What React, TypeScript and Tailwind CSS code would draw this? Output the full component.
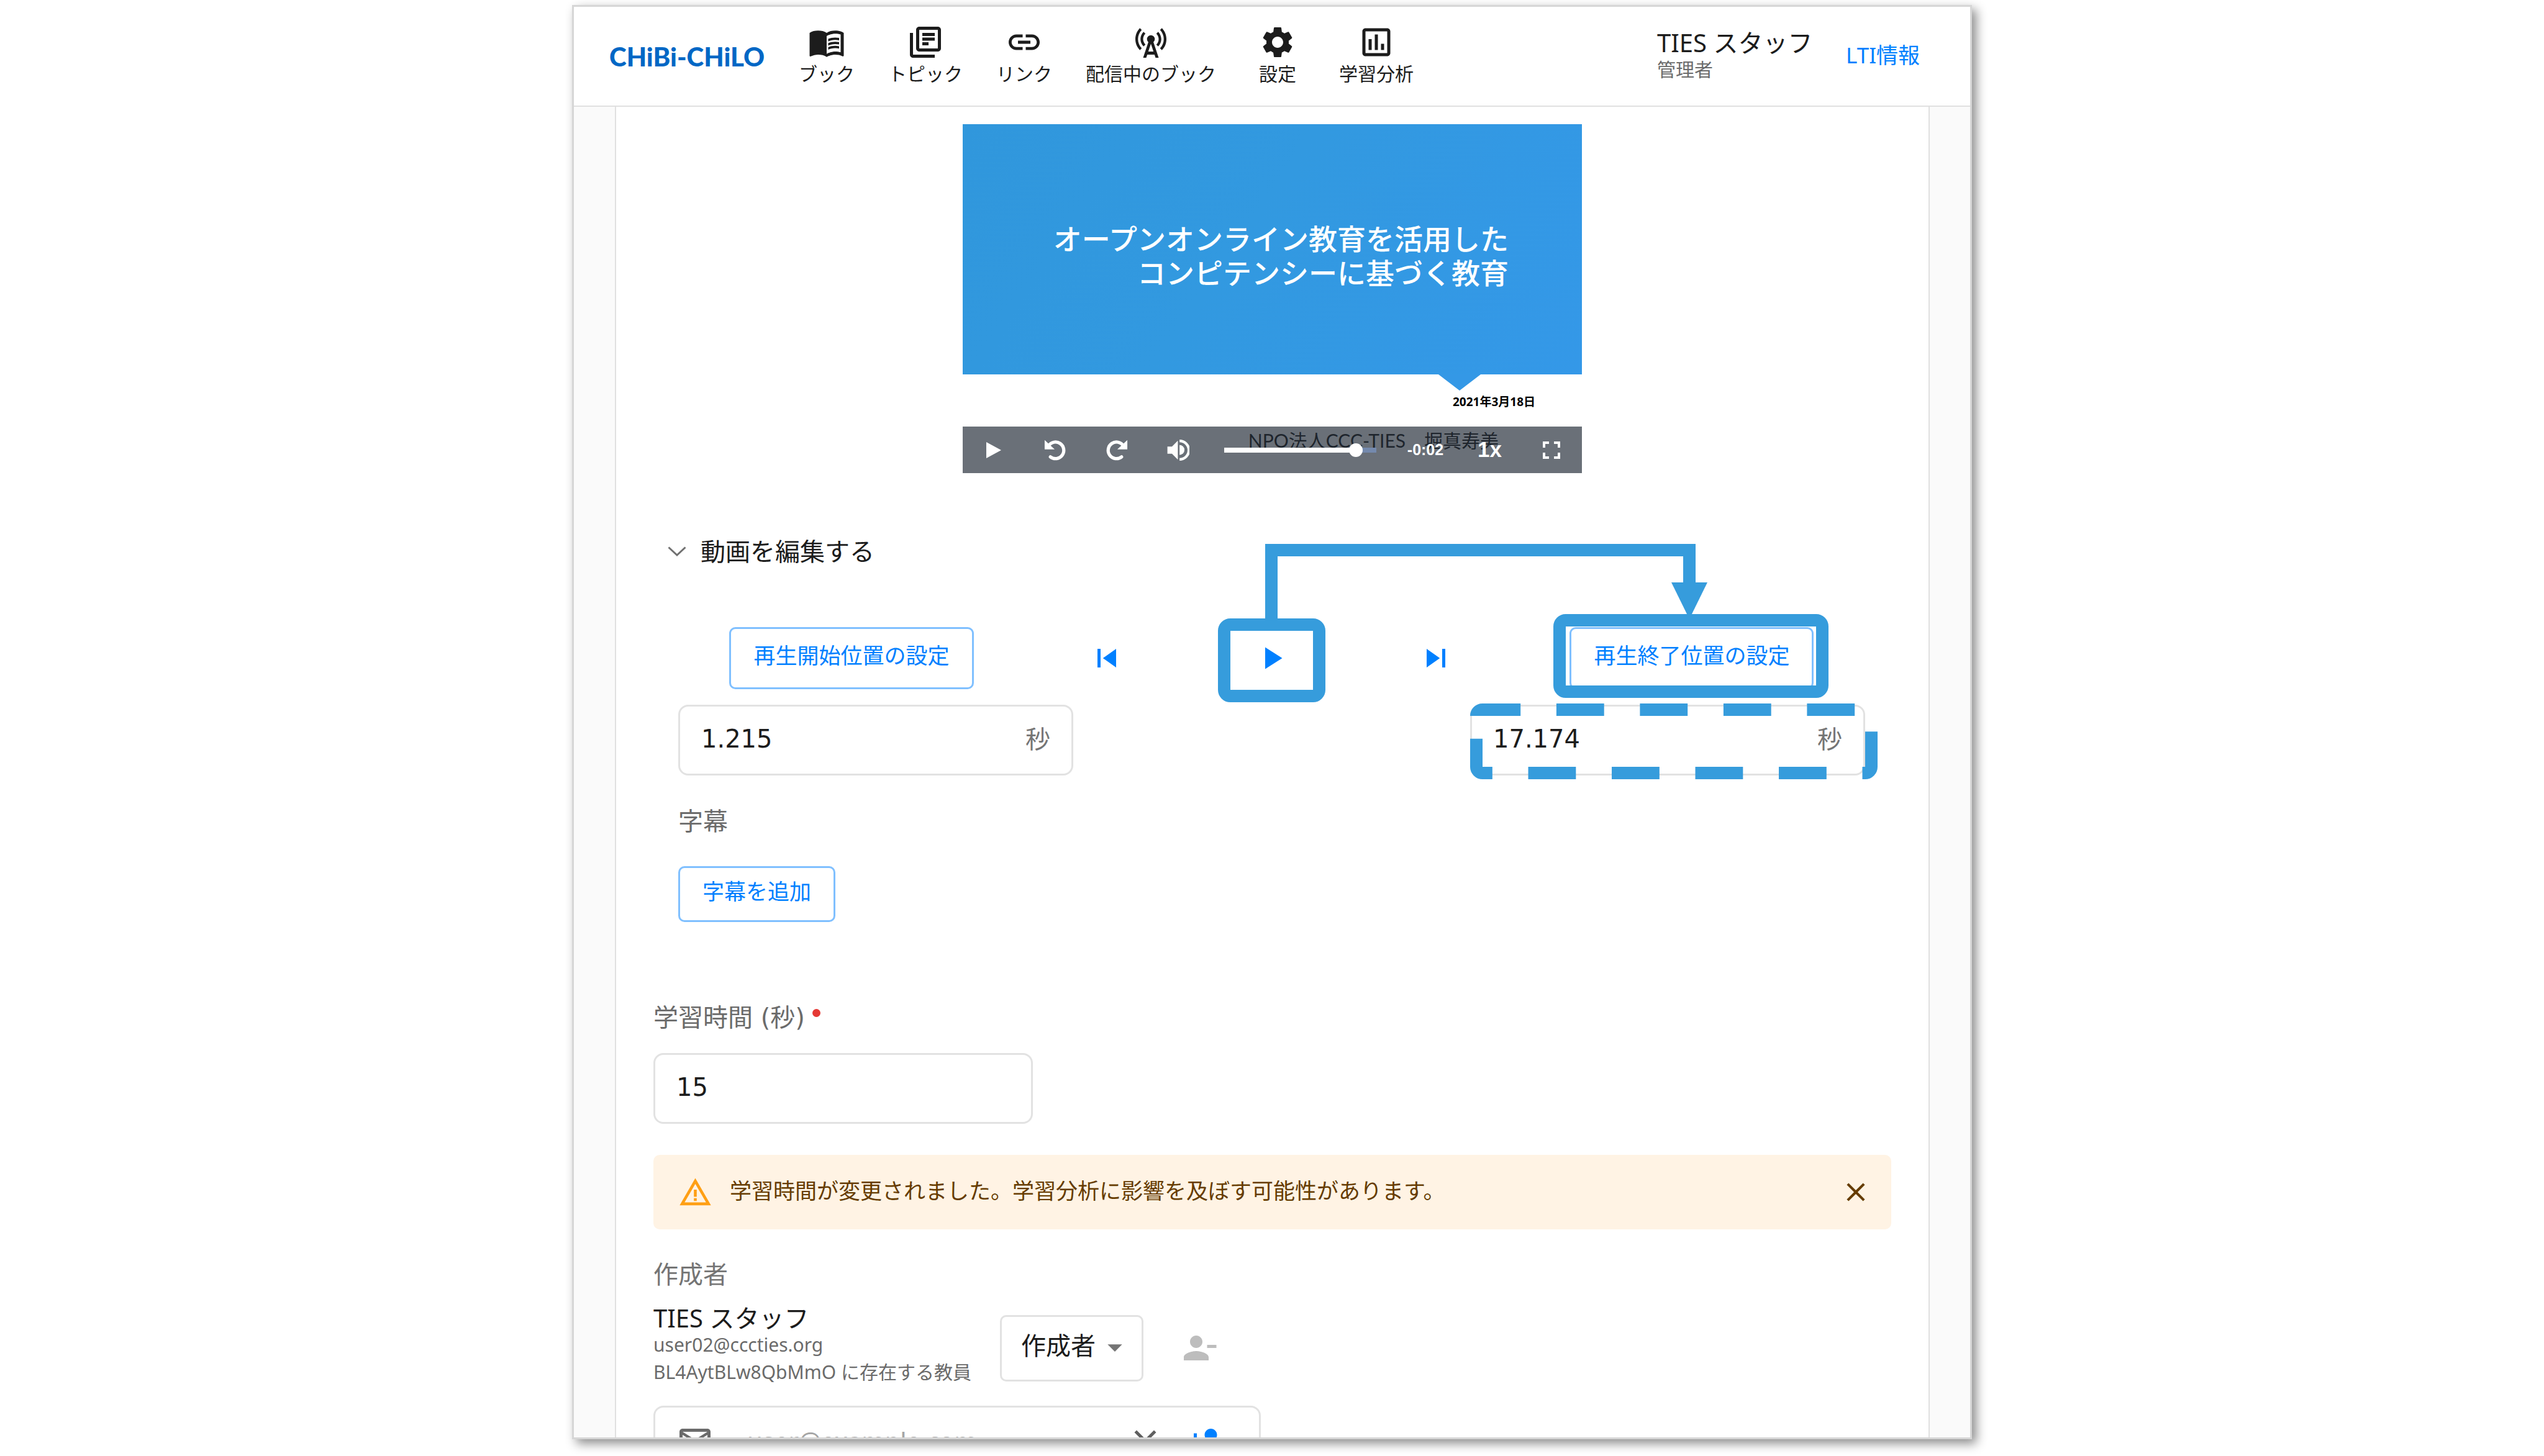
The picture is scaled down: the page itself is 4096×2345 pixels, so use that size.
import React from "react";
import type { IconType } from "react-icons";
import {
  MdMenuBook,
  MdOutlineLibraryBooks,
  MdLink,
  MdCellTower,
  MdSettings,
  MdOutlineAssessment,
  MdSkipPrevious,
  MdSkipNext,
  MdPlayArrow,
  MdWarningAmber,
  MdClose,
  MdArrowDropDown,
  MdPersonRemove,
  MdPersonAdd,
  MdMailOutline,
  MdFullscreen,
} from "react-icons/md";

const navItems: { label: string; Icon: IconType }[] = [
  { label: "ブック", Icon: MdMenuBook },
  { label: "トピック", Icon: MdOutlineLibraryBooks },
  { label: "リンク", Icon: MdLink },
  { label: "配信中のブック", Icon: MdCellTower },
  { label: "設定", Icon: MdSettings },
  { label: "学習分析", Icon: MdOutlineAssessment },
];

function Header() {
  return (
    <header className="flex h-[161px] shrink-0 items-center border-b-2 border-[#e0e0e0] bg-white pr-[81px] pl-[57px]">
      <a
        href="#home"
        className="w-[251px] font-['Lato','Noto_Sans',sans-serif] text-[42px] leading-none font-black whitespace-nowrap text-[#0067c5]"
      >
        CHiBi-CHiLO
      </a>
      <nav className="ml-[54px] flex gap-[54px]">
        {navItems.map(({ label, Icon }) => (
          <a key={label} href="#nav" className="flex min-w-[90px] flex-col items-center pb-1">
            <Icon className="size-[60px] text-[#1c1c1c]" />
            <span className="text-[30px] leading-[42px] whitespace-nowrap">{label}</span>
          </a>
        ))}
      </nav>
      <div className="ml-auto w-[264px] pb-2">
        <p className="text-[40px] leading-[50px] whitespace-nowrap">TIES スタッフ</p>
        <p className="text-[30px] leading-[36px] text-[#6b6b6b]">管理者</p>
      </div>
      <a href="#lti" className="ml-10 pb-1 text-[35px] leading-[50px] whitespace-nowrap text-[#0080ff]">
        LTI情報
      </a>
    </header>
  );
}

function RewindIcon({ flip = false }: { flip?: boolean }) {
  return (
    <svg viewBox="425 76 116 116" className={flip ? "size-9 -scale-x-100" : "size-9"} aria-hidden="true">
      <path d="M428 82V130H480Z" fill="#fff" />
      <path d="M448 112A43 43 0 1 1 458 169" fill="none" stroke="#fff" strokeWidth="17" strokeLinecap="round" />
    </svg>
  );
}

function VolumeIcon() {
  return (
    <svg viewBox="1062 71 118 118" className="size-9" aria-hidden="true">
      <path d="M1064 111H1088L1119 80V180L1088 149H1064Z" fill="#fff" />
      <path d="M1128 103A26 26 0 0 1 1128 155Z" fill="#fff" />
      <path d="M1128 81A48 48 0 0 1 1128 179" fill="none" stroke="#fff" strokeWidth="14" />
    </svg>
  );
}

const playerButton = "flex h-full w-[99px] shrink-0 items-center justify-center text-white";

function VideoPlayer() {
  return (
    <section aria-label="動画" className="relative mx-auto flex h-[562px] w-[997px] flex-col overflow-hidden bg-white">
      <div className="flex h-[403px] shrink-0 flex-col items-end justify-center bg-[linear-gradient(125deg,#3097dc_0%,#3299e0_45%,#3498e8_100%)] pt-5 pr-[118px] text-right text-[46px] leading-[55px] font-medium whitespace-nowrap text-white">
        <p>オープンオンライン教育を活用した</p>
        <p>コンピテンシーに基づく教育</p>
      </div>
      <svg viewBox="0 0 68 26" className="mr-[163px] h-[26px] w-[68px] shrink-0 self-end" aria-hidden="true">
        <path d="M0 0H68L34 26Z" fill="#3498e6" />
      </svg>
      <p className="mt-[5px] mr-[75px] self-end text-[19px] leading-[26px] font-bold text-black">2021年3月18日</p>
      <p className="mt-[34px] mr-[134px] self-end font-['Lato','Noto_Sans_CJK_JP',sans-serif] text-[30px] leading-[30px] whitespace-pre text-black">
        NPO法人CCC-TIES　堀真寿美
      </p>
      <div className="absolute inset-x-0 bottom-0 flex h-[75px] items-center bg-[#2b333f]/70">
        <button type="button" aria-label="再生" className={playerButton}>
          <svg viewBox="0 0 24 26" className="h-[26px] w-6" aria-hidden="true">
            <path d="M0 0L24 13L0 26Z" fill="#fff" />
          </svg>
        </button>
        <button type="button" aria-label="戻る" className={playerButton}>
          <RewindIcon />
        </button>
        <button type="button" aria-label="進む" className={playerButton}>
          <RewindIcon flip />
        </button>
        <button type="button" aria-label="音量" className={playerButton}>
          <VolumeIcon />
        </button>
        <div className="flex flex-1 items-center px-[25px]">
          <input
            type="range"
            aria-label="再生位置"
            min={0}
            max={100}
            defaultValue={90}
            className="h-2 w-full appearance-none bg-[linear-gradient(to_right,#fff_87%,#7489ad_87%)] [&::-webkit-slider-thumb]:size-[22px] [&::-webkit-slider-thumb]:appearance-none [&::-webkit-slider-thumb]:rounded-full [&::-webkit-slider-thumb]:bg-white"
          />
        </div>
        <span className="w-[108px] text-center font-['Liberation_Sans',sans-serif] text-[25px] font-bold text-white">
          -0:02
        </span>
        <button
          type="button"
          aria-label="再生速度"
          className="flex h-full w-[99px] items-center justify-center font-['Liberation_Sans',sans-serif] text-[35px] font-bold text-white"
        >
          1x
        </button>
        <button type="button" aria-label="全画面" className={playerButton}>
          <MdFullscreen className="size-12" />
        </button>
      </div>
    </section>
  );
}

const outlineButton =
  "rounded-[10px] border-[3px] border-[#80c0ff] px-[36px] pb-2 text-[35px] whitespace-nowrap text-[#0080ff]";
const iconButton = "flex size-[100px] shrink-0 items-center justify-center text-[#0080ff]";
const field = "flex h-[114px] items-center rounded-2xl border-[3px] border-[#e2e2e2] bg-white pr-[34px] pl-[34px]";
const fieldInput =
  "min-w-0 flex-1 bg-transparent pb-1 font-['DejaVu_Sans','Noto_Sans_CJK_JP',sans-serif] text-[40px] leading-[60px] outline-none";

function SecondsField({ label, value }: { label: string; value: string }) {
  return (
    <label className={`${field} w-[636px]`}>
      <input aria-label={label} defaultValue={value} className={fieldInput} />
      <span className="pb-1 text-[40px] leading-[60px] text-[#757575]">秒</span>
    </label>
  );
}

/** Frame drawn around a control to call attention to it. */
function Highlight({ className }: { className: string }) {
  return (
    <span
      aria-hidden="true"
      className={`pointer-events-none absolute rounded-[20px] border-[20px] border-[#369cdc] ${className}`}
    />
  );
}

function VideoEditor() {
  return (
    <section className="mt-[96px]">
      <button type="button" aria-expanded="true" className="flex h-[60px] items-center gap-[23px] pl-[23px] text-[40px]">
        <svg viewBox="0 0 30 16" className="h-4 w-[30px]" aria-hidden="true">
          <path d="M1.5 1.5L15 14L28.5 1.5" fill="none" stroke="#707070" strokeWidth="3" />
        </svg>
        動画を編集する
      </button>
      <div className="pr-[42px] pl-10">
        <div className="relative mt-[92px] flex h-[100px] items-center justify-around">
          <button type="button" className={`${outlineButton} h-[100px]`}>
            再生開始位置の設定
          </button>
          <button type="button" aria-label="開始位置へ" className={iconButton}>
            <MdSkipPrevious className="size-[60px]" />
          </button>
          <div className="relative">
            <button type="button" aria-label="再生" className={iconButton}>
              <MdPlayArrow className="size-[60px]" />
            </button>
            <Highlight className="-top-[14px] -left-[36px] h-[135px] w-[173px]" />
            <svg
              viewBox="0 0 712 121"
              className="pointer-events-none absolute bottom-[113px] left-[40px] h-[121px] w-[712px]"
              aria-hidden="true"
            >
              <path d="M10 121V10H683V70" fill="none" stroke="#369cdc" strokeWidth="20" />
              <path d="M654 62H712L683 121Z" fill="#369cdc" />
            </svg>
          </div>
          <button type="button" aria-label="終了位置へ" className={iconButton}>
            <MdSkipNext className="size-[60px]" />
          </button>
          <div className="relative">
            <button type="button" className={`${outlineButton} h-[100px]`}>
              再生終了位置の設定
            </button>
            <Highlight className="-top-[21px] -left-[26px] h-[135px] w-[443px]" />
          </div>
        </div>
        <div className="mt-[25px] flex justify-between">
          <SecondsField label="再生開始位置" value="1.215" />
          <div className="relative">
            <SecondsField label="再生終了位置" value="17.174" />
            <svg
              viewBox="0 0 656 122"
              className="pointer-events-none absolute -top-[2px] left-0 h-[122px] w-[656px]"
              aria-hidden="true"
            >
              <path
                d="M10 20A10 10 0 0 1 20 10H636A10 10 0 0 1 646 20V102A10 10 0 0 1 636 112H20A10 10 0 0 1 10 102Z"
                fill="none"
                stroke="#369cdc"
                strokeWidth="20"
                strokeDasharray="76.8 57.7"
              />
            </svg>
          </div>
        </div>
        <p className="mt-[43px] text-[40px] leading-[60px] text-[#6b6b6b]">字幕</p>
        <button type="button" className={`${outlineButton} mt-[43px] h-[90px]`}>
          字幕を追加
        </button>
      </div>
    </section>
  );
}

function Authors() {
  return (
    <section className="mt-[42px]">
      <h2 className="text-[40px] leading-[60px] text-[#757575]">作成者</h2>
      <div className="mt-[20px] flex items-center gap-10">
        <div className="w-[518px] whitespace-nowrap">
          <p className="text-[40px] leading-[42px]">TIES スタッフ</p>
          <p className="text-[30px] leading-[44px] text-[#6b6b6b]">user02@cccties.org</p>
          <p className="text-[30px] leading-[44px] text-[#6b6b6b]">BL4AytBLw8QbMmO に存在する教員</p>
        </div>
        <div className="relative mt-2">
          <select
            aria-label="役割"
            className="h-[107px] w-[231px] appearance-none rounded-[10px] border-[3px] border-[#e2e2e2] bg-white pb-2 pl-[31px] text-[40px]"
          >
            <option>作成者</option>
          </select>
          <MdArrowDropDown className="pointer-events-none absolute top-6 right-[18px] size-14 text-[#757575]" />
        </div>
        <button type="button" aria-label="削除" className="mt-2 flex size-[100px] items-center justify-center">
          <MdPersonRemove className="size-[60px] text-[#bdbdbd]" />
        </button>
      </div>
      <div className="mt-[32px] flex h-[114px] w-[978px] items-center rounded-2xl border-[3px] border-[#e2e2e2] pr-[55px] pl-[34px]">
        <MdMailOutline className="size-[60px] shrink-0 text-[#6b6b6b]" />
        <input
          type="email"
          aria-label="メールアドレス"
          placeholder="user@example.com"
          className="ml-[54px] min-w-0 flex-1 text-[40px] leading-[60px] outline-none placeholder:text-[#a5a5a5]"
        />
        <button type="button" aria-label="クリア" className="shrink-0">
          <MdClose className="size-[60px] text-[#5f5f5f]" />
        </button>
        <button type="button" aria-label="追加" className="ml-[38px] shrink-0">
          <MdPersonAdd className="size-[60px] text-[#0080ff]" />
        </button>
      </div>
    </section>
  );
}

export default function App() {
  return (
    <div className="flex h-screen flex-col overflow-hidden bg-white px-[921px] pt-2 pb-[27px] font-['Noto_Sans','Noto_Sans_CJK_JP',sans-serif] text-[#1c1c1c]">
      <div className="flex min-h-0 flex-1 flex-col overflow-hidden border-[3px] border-[#d6d6d6] bg-[#fafafa] shadow-[7px_7px_16px_rgba(0,0,0,0.45)]">
        <Header />
        <main className="mr-[65px] ml-[66px] min-h-0 flex-1 overflow-hidden border-x-2 border-[#e0e0e0] bg-white px-[60px] pt-[28px]">
          <VideoPlayer />
          <VideoEditor />
          <div className="mt-[124px]">
            <label
              htmlFor="study-time"
              className="flex items-center font-['DejaVu_Sans','Noto_Sans_CJK_JP',sans-serif] text-[40px] leading-[60px] text-[#6b6b6b]"
            >
              学習時間 (秒)
              <span aria-hidden="true" className="mb-4 ml-3 size-[13px] rounded-full bg-[#e53935]" />
            </label>
            <div className={`${field} mt-[27px] w-[611px]`}>
              <input id="study-time" defaultValue="15" className={fieldInput} />
            </div>
          </div>
          <div role="alert" className="mt-[50px] flex h-[120px] items-center rounded-[10px] bg-[#fff3e4] pr-8 pl-10">
            <MdWarningAmber className="size-[55px] shrink-0 text-[#ff9f14]" />
            <p className="ml-[28px] flex-1 pb-1 text-[35px] leading-[50px] whitespace-nowrap text-[#663c00]">
              学習時間が変更されました。学習分析に影響を及ぼす可能性があります。
            </p>
            <button type="button" aria-label="閉じる" className="shrink-0">
              <MdClose className="size-[50px] text-[#663c00]" />
            </button>
          </div>
          <Authors />
        </main>
      </div>
    </div>
  );
}
